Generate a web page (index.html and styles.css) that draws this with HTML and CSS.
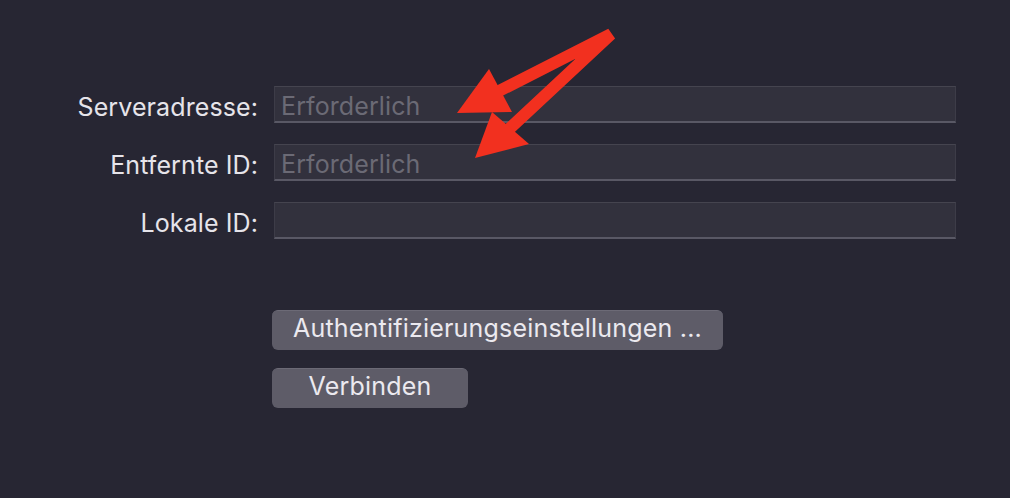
FILE: index.html
```html
<!DOCTYPE html>
<html lang="de">
<head>
    <meta charset="UTF-8">
    <meta name="viewport" content="width=device-width, initial-scale=1.0">
    <title>Verbinden</title>
    <link rel="stylesheet" href="styles.css">
</head>
<body>

    <div class="panel">
        <form class="form">
            <label for="server">Serveradresse:</label>
            <input type="text" id="server" placeholder="Erforderlich">

            <label for="remoteId">Entfernte ID:</label>
            <input type="text" id="remoteId" placeholder="Erforderlich">

            <label for="localId">Lokale ID:</label>
            <input type="text" id="localId">
        </form>

        <div class="actions">
            <button type="button" class="btn btn-auth">Authentifizierungseinstellungen ...</button>
            <button type="button" class="btn btn-connect">Verbinden</button>
        </div>
    </div>

    <!-- Markierung -->
    <svg class="arrows" width="1010" height="498" viewBox="0 0 1010 498">
        <polyline points="497,92 611,34 508,130" fill="none" stroke="#f2301f" stroke-width="12" stroke-linejoin="bevel"/>
        <polygon points="457,113 489,69 512,112" fill="#f2301f"/>
        <polygon points="475,158 492,112 529,144" fill="#f2301f"/>
    </svg>

</body>
</html>
```

FILE: styles.css
```css
html, body {
    margin: 0;
    height: 100%;
}
body {
    background-color: #272633;
    font-family: Inter, "Noto Sans", sans-serif;
    color: #e6e4ea;
    position: relative;
    overflow: hidden;
}
.panel {
    padding: 86px 54px 0 0;
}
.form {
    display: grid;
    grid-template-columns: 258px 682px;
    column-gap: 16px;
    row-gap: 21px;
    align-items: center;
}
label {
    text-align: right;
    padding-top: 4px;
    font-size: 25px;
    letter-spacing: 0.1px;
}
input {
    box-sizing: border-box;
    height: 37px;
    width: 100%;
    margin: 0;
    padding: 4px 6px 0;
    background-color: #32313d;
    border: 1px solid #3d3c48;
    border-top-color: #45444f;
    border-bottom: 2px solid #595865;
    border-radius: 0;
    color: #e6e4ea;
    font-family: Inter, "Noto Sans", sans-serif;
    font-size: 25px;
    letter-spacing: 0.1px;
    outline: none;
}
input::placeholder {
    color: #6b6a75;
}
.actions {
    display: flex;
    flex-direction: column;
    align-items: flex-start;
    gap: 18px;
    margin: 71px 0 0 272px;
}
.btn {
    box-sizing: border-box;
    height: 40px;
    padding: 0 0 6px;
    background-color: #5e5c68;
    color: #ebe9ef;
    border: none;
    border-top: 1px solid #6c6a76;
    border-radius: 6px;
    font-family: Inter, "Noto Sans", sans-serif;
    font-size: 25px;
    letter-spacing: 0.2px;
    cursor: pointer;
}
.btn-auth {
    width: 451px;
}
.btn-connect {
    width: 196px;
}
.arrows {
    position: absolute;
    left: 0;
    top: 0;
    pointer-events: none;
}
```
